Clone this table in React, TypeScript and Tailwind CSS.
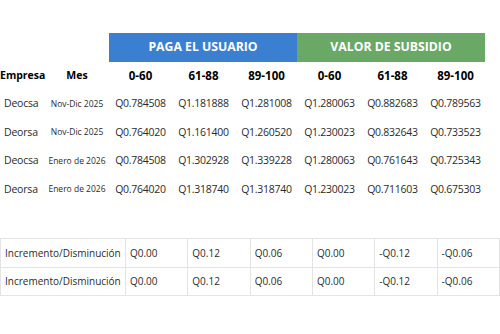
import React from 'react';

const font = { fontFamily: '"Open Sans", "Liberation Sans", sans-serif' };

const rows = [
  { empresa: 'Deocsa', mes: 'Nov-Dic 2025', vals: ['Q0.784508', 'Q1.181888', 'Q1.281008', 'Q1.280063', 'Q0.882683', 'Q0.789563'] },
  { empresa: 'Deorsa', mes: 'Nov-Dic 2025', vals: ['Q0.764020', 'Q1.161400', 'Q1.260520', 'Q1.230023', 'Q0.832643', 'Q0.733523'] },
  { empresa: 'Deocsa', mes: 'Enero de 2026', vals: ['Q0.784508', 'Q1.302928', 'Q1.339228', 'Q1.280063', 'Q0.761643', 'Q0.725343'] },
  { empresa: 'Deorsa', mes: 'Enero de 2026', vals: ['Q0.764020', 'Q1.318740', 'Q1.318740', 'Q1.230023', 'Q0.711603', 'Q0.675303'] },
];

const ranges = ['0-60', '61-88', '89-100', '0-60', '61-88', '89-100'];

const diffs = ['Q0.00', 'Q0.12', 'Q0.06', 'Q0.00', '-Q0.12', '-Q0.06'];

export default function App() {
  return (
    <div className="w-[500px] h-[334px] bg-white overflow-hidden text-[#2b2b2b]" style={font}>
      <div className="pt-[33px]">
        {/* grupo */}
        <div className="grid grid-cols-[109px_188px_188px] h-[29px]">
          <div />
          <div className="bg-[#3b7fd0] text-white font-bold text-[12.25px] flex items-center justify-center">PAGA EL USUARIO</div>
          <div className="bg-[#6aa865] text-white font-bold text-[12.25px] flex items-center justify-center">VALOR DE SUBSIDIO</div>
        </div>

        <div className="grid grid-cols-[45px_64px_repeat(6,63px)] h-[28px] items-center text-black font-bold">
          <div className="text-[10.5px]">Empresa</div>
          <div className="text-[10.5px] text-center">Mes</div>
          {ranges.map((r, i) => (
            <div key={i} className="text-[11.5px] text-center">{r}</div>
          ))}
        </div>

        {rows.map((row, i) => (
          <div key={i} className="grid grid-cols-[45px_64px_repeat(6,63px)] h-[28.5px] items-center">
            <div className="text-[10.5px] tracking-[-0.2px] pl-[4px]">{row.empresa}</div>
            <div className="text-[8.5px] text-center">{row.mes}</div>
            {row.vals.map((v, j) => (
              <div key={j} className="text-[10.5px] tracking-[-0.25px] text-center">{v}</div>
            ))}
          </div>
        ))}
      </div>

      <table className="mt-[34px] w-[500px] border-collapse text-[10px] text-[#2b2b2b]">
        <tbody>
          {[0, 1].map((r) => (
            <tr key={r} className={r === 0 ? 'h-[29px]' : 'h-[28px]'}>
              <td className="w-[125px] border border-[#e4e4e4] pl-[4px]">Incremento/Disminución</td>
              {diffs.map((d, j) => (
                <td key={j} className="w-[62.5px] border border-[#e4e4e4] pl-[4px]">{d}</td>
              ))}
            </tr>
          ))}
        </tbody>
      </table>
    </div>
  );
}
